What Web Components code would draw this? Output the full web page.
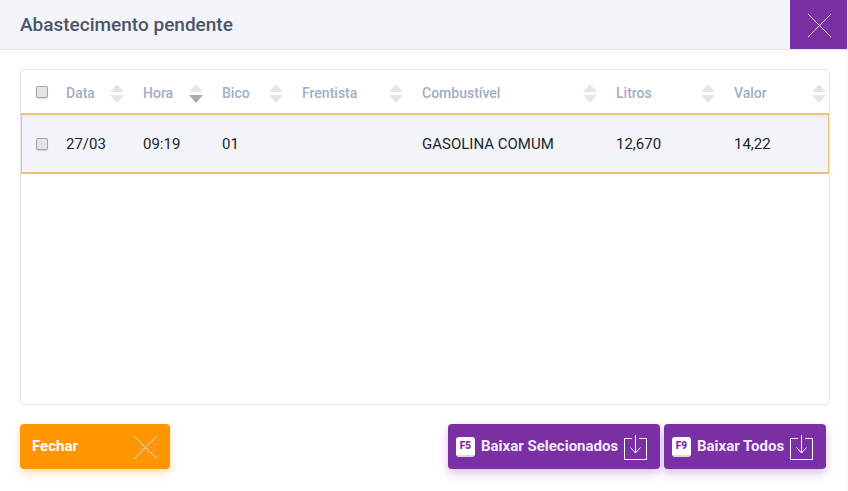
<!DOCTYPE html>
<html lang="pt"><head><meta charset="utf-8"><title>Abastecimento pendente</title>
<style>html,body{margin:0;padding:0;background:#f8f8fc}body{font-family:Roboto,sans-serif;width:848px;height:491px;overflow:hidden}</style></head>
<body>
<pending-dialog heading="Abastecimento pendente">
  <fuel-table></fuel-table>
  <action-button slot="left" tone="orange" label="Fechar" icon="x" style="width:150px"></action-button>
  <action-button slot="right" tone="purple" label="Baixar Selecionados" shortcut="F5" icon="down" style="width:212px"></action-button>
  <action-button slot="right" tone="purple" label="Baixar Todos" shortcut="F9" icon="down" style="width:162px"></action-button>
</pending-dialog>
<script>
const X_ICON = s => `<svg width="${s}" height="${s}" viewBox="0 0 24 24" fill="none" stroke="currentColor" stroke-width="${24/s}" aria-hidden="true"><path d="M0 0L24 24M24 0L0 24"/></svg>`;
class PendingDialog extends HTMLElement{
  constructor(){super();const r=this.attachShadow({mode:'open'});
  r.innerHTML=`<style>
  :host{display:flex;flex-direction:column;width:847px;height:491px;box-sizing:border-box;background:#fff;font-family:Roboto,sans-serif}
  header{display:flex;justify-content:space-between;align-items:stretch;height:50px;box-sizing:border-box;background:#f3f4f9;border-bottom:1px solid #e6e7ee}
  h1{margin:0;padding-left:20px;font-size:19px;line-height:49px;font-weight:500;color:#4a5568}
  .close{width:57px;height:49px;box-sizing:border-box;padding:1px 0 0 2px;background:#7b2fa5;color:#e9dcf1;display:flex;align-items:center;justify-content:center}
  main{padding:19px 17px 0 20px;flex:none;height:355px;box-sizing:border-box}
  footer{display:flex;justify-content:space-between;padding:19px 21px 0 20px}
  .r{display:flex;gap:4px}
  </style>
  <header><h1></h1><div class="close">${X_ICON(23)}</div></header>
  <main><slot></slot></main>
  <footer><slot name="left"></slot><div class="r"><slot name="right"></slot></div></footer>`;
  r.querySelector('h1').textContent=this.getAttribute('heading');}
}
class SortArrows extends HTMLElement{
  constructor(){super();const r=this.attachShadow({mode:'open'});const a=this.hasAttribute('active');
  r.innerHTML=`<style>:host{display:block;width:14px;height:19px;flex:none;margin-top:3px}svg{display:block}</style>
  <svg width="14" height="19" viewBox="0 0 14 19"><path d="M7 0L14 8H0Z" fill="#e3e5e8"/><path d="M0 11H14L7 19Z" fill="${a?'#a9abaf':'#e3e5e8'}"/></svg>`;}
}
class FakeCheck extends HTMLElement{
  constructor(){super();this.attachShadow({mode:'open'}).innerHTML=`<style>:host{display:block;width:12px;height:12px;box-sizing:border-box;background:#e4e4e4;border:1px solid #a3a3a3;border-radius:2px;box-shadow:0 1px 1px rgba(0,0,0,.15)}</style>`;}
}
class FuelTable extends HTMLElement{
  constructor(){super();const r=this.attachShadow({mode:'open'});
  const cols=['Data','Hora','Bico','Frentista','Combustível','Litros','Valor'];
  const vals=['27/03','09:19','01','','GASOLINA COMUM','12,670','14,22'];
  r.innerHTML=`<style>
  :host{display:block;width:810px;height:336px;box-sizing:border-box;border:1px solid #e2e5ea;border-radius:4px;font-family:Roboto,sans-serif;overflow:hidden}
  .row{display:grid;grid-template-columns:45px 77px 79px 80px 120px 194px 118px 95px}
  .head{height:43px;align-items:center}
  .sel{height:61px;align-items:center;background:#f3f4f9;border:2px solid #f0c26f;border-left-width:1px;border-right-width:1px;box-sizing:border-box;box-shadow:inset 0 6px 6px -6px rgba(0,0,0,.08)}
  .c{padding-left:15px}
  .sel .c{padding-left:14px}
  .th{display:flex;justify-content:space-between;align-items:center;padding-right:19px;font-size:14px;font-weight:500;color:#a0aec0}
  .th span{margin-top:2px}
  .th:last-child{padding-right:3px}
  .td{font-size:15px;line-height:20px;color:#212529;transform:translateX(-1px)}
  .sel .td:first-of-type{transform:none}
  </style>
  <div class="row head"><div class="c"><fake-check></fake-check></div>${cols.map((c,i)=>`<div class="th"><span>${c}</span><sort-arrows ${i==1?'active':''}></sort-arrows></div>`).join('')}</div>
  <div class="row sel"><div class="c"><fake-check></fake-check></div>${vals.map(v=>`<div class="td">${v}</div>`).join('')}</div>`;}
}
class ActionButton extends HTMLElement{
  constructor(){super();const r=this.attachShadow({mode:'open'});
  const tone=this.getAttribute('tone'),sc=this.getAttribute('shortcut'),icon=this.getAttribute('icon');
  const bg=tone==='orange'?'#ff9500':'#7b2fa5', sh=tone==='orange'?'rgba(255,149,0,.3)':'rgba(123,47,165,.3)';
  const ic=icon==='x'?`<span class="x">${X_ICON(23)}</span>`:`<svg class="dl" width="23" height="25" viewBox="0 0 23 25" fill="none" stroke="#fff" aria-hidden="true"><path d="M8 3.5H.5V24.5H22.5V3.5H15"/><path d="M11.5 0V18" /><path d="M6.5 12.5L11.5 18L16.5 12.5"/></svg>`;
  r.innerHTML=`<style>
  :host{display:block;height:45px;box-sizing:border-box;flex:none}
  .b{height:45px;box-sizing:border-box;display:flex;align-items:center;background:${bg};border-radius:4px;box-shadow:0 4px 10px ${sh};color:#fff;font:700 15px/20px Roboto,sans-serif;padding:0 ${icon==='x'?'13px 0 12px':'13px 0 8px'}}
  .k{width:19px;height:20px;box-sizing:border-box;background:#fff;border-radius:3px;border-bottom:2px solid #dcdcdc;color:${bg};font-size:10px;line-height:10px;font-weight:900;display:flex;align-items:center;justify-content:center;margin-right:6px;flex:none}
  .l{flex:1;white-space:nowrap;color:#f3e9f8;margin-top:-2px}
  .x{color:#ffe3bb;display:flex;margin-top:1px}
  :host([tone=orange]) .l{color:#fff}
  .dl{flex:none;margin-top:2px}
  </style><div class="b">${sc?`<span class="k">${sc}</span>`:''}<span class="l">${this.getAttribute('label')}</span>${ic}</div>`;}
}
customElements.define('sort-arrows',SortArrows);
customElements.define('fake-check',FakeCheck);
customElements.define('fuel-table',FuelTable);
customElements.define('action-button',ActionButton);
customElements.define('pending-dialog',PendingDialog);
</script>
</body></html>
